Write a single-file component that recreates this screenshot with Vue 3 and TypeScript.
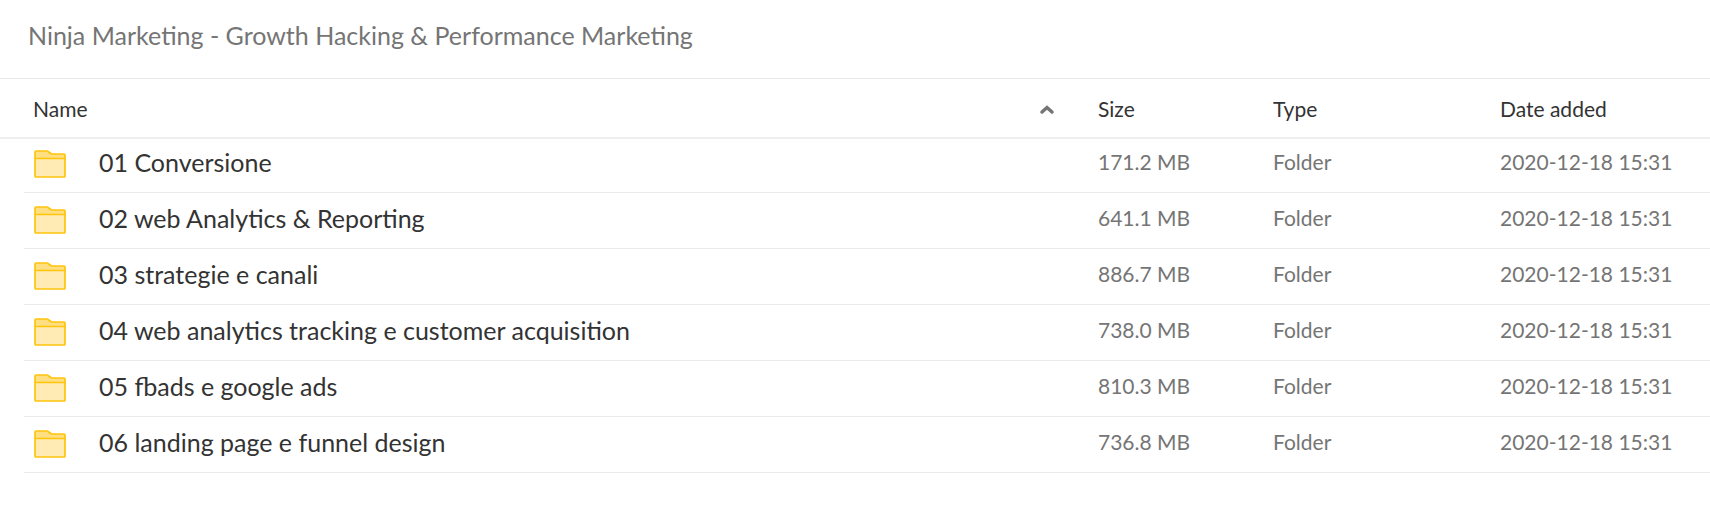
<script setup lang="ts">
interface Entry {
  name: string
  size: string
  added: string
}

const title = 'Ninja Marketing - Growth Hacking & Performance Marketing'
const entries: Entry[] = [
  { name: '01 Conversione', size: '171.2 MB', added: '2020-12-18 15:31' },
  { name: '02 web Analytics & Reporting', size: '641.1 MB', added: '2020-12-18 15:31' },
  { name: '03 strategie e canali', size: '886.7 MB', added: '2020-12-18 15:31' },
  { name: '04 web analytics tracking e customer acquisition', size: '738.0 MB', added: '2020-12-18 15:31' },
  { name: '05 fbads e google ads', size: '810.3 MB', added: '2020-12-18 15:31' },
  { name: '06 landing page e funnel design', size: '736.8 MB', added: '2020-12-18 15:31' },
]
</script>

<template>
  <main class="browser">
    <header class="bar">
      <h1 class="title">{{ title }}</h1>
    </header>
    <table class="files">
      <thead>
        <tr>
          <th class="name" scope="col" aria-sort="ascending">
            <button class="sort" type="button">
              Name
              <svg class="arrow" width="16" height="12" viewBox="0 0 16 12" aria-hidden="true">
                <path d="M3 9 8 4.500l5 4.500" fill="none" stroke="#757575" stroke-width="3.500" stroke-linecap="round" />
              </svg>
            </button>
          </th>
          <th class="size" scope="col"><button class="sort" type="button">Size</button></th>
          <th class="type" scope="col"><button class="sort" type="button">Type</button></th>
          <th class="date" scope="col"><button class="sort" type="button">Date added</button></th>
        </tr>
      </thead>
      <tbody>
        <tr v-for="entry in entries" :key="entry.name">
          <td class="name">
            <div class="entry">
              <svg class="folder" width="32" height="32" viewBox="0 0 32 32" aria-hidden="true">
                <path d="M1 12V6q0-1 1-1h12l4 3h12q1 0 1 1v3z" fill="#ffdf80" />
                <path d="M1 12.500h30V30q0 1-1 1H2q-1 0-1-1z" fill="#ffebb3" />
                <path d="M1 12.500h30M2 5h11.500L17.500 8H30q1 0 1 1v21q0 1-1 1H2q-1 0-1-1V6q0-1 1-1z" fill="none" stroke="#ffc40c" stroke-width="1.700" />
              </svg>
              <span>{{ entry.name }}</span>
            </div>
          </td>
          <td>{{ entry.size }}</td>
          <td>Folder</td>
          <td>{{ entry.added }}</td>
        </tr>
      </tbody>
    </table>
  </main>
</template>

<style>
body {
  margin: 0;
  background: #fff;
}
</style>

<style scoped>
.browser {
  font-family: Lato, "Liberation Sans", sans-serif;
  color: #333;
}
.bar {
  padding: 19px 28px 27px;
  border-bottom: 1px solid #eaeaea;
}
.title {
  margin: 0;
  font-size: 25px;
  line-height: 32px;
  font-weight: 400;
  color: #757575;
}
.files {
  width: 100%;
  table-layout: fixed;
  border-collapse: separate;
  border-spacing: 0;
}
thead {
  box-shadow: 0 2px 0 #eee;
}
th,
td {
  padding: 0;
  text-align: left;
  font-size: 21px;
  font-weight: 400;
  white-space: nowrap;
}
th {
  height: 56px;
  padding-top: 2px;
}
th.name {
  padding: 2px 43px 0 33px;
}
.size {
  width: 175px;
}
.type {
  width: 227px;
}
.date {
  width: 210px;
}
.sort {
  display: flex;
  align-items: center;
  justify-content: space-between;
  width: 100%;
  padding: 4px 0;
  border: 0;
  background: none;
  font: inherit;
  line-height: 24px;
  color: inherit;
  text-align: left;
  cursor: pointer;
}
tbody tr {
  background: linear-gradient(#eaeaea, #eaeaea) no-repeat right bottom / calc(100% - 24px) 1px;
}
td {
  height: 49px;
  padding-bottom: 7px;
  color: #757575;
}
td.name {
  height: 50px;
  padding-bottom: 6px;
  padding-left: 34px;
  font-size: 25px;
  color: #333;
}
.entry {
  display: flex;
  align-items: center;
  gap: 33px;
}
.folder {
  flex: none;
}
</style>
